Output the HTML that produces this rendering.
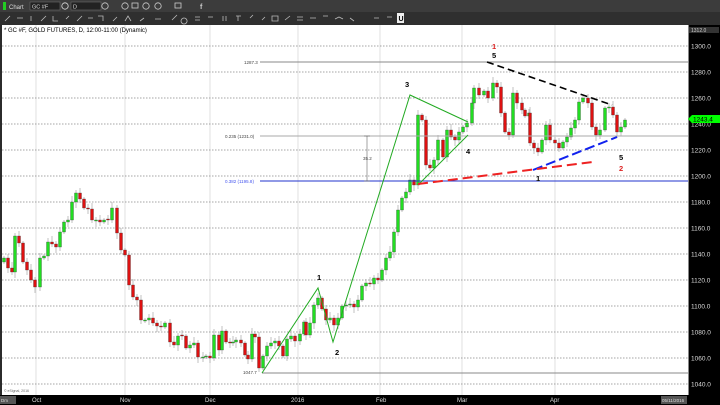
<!DOCTYPE html>
<html><head><meta charset="utf-8"><style>
html,body{margin:0;padding:0;background:#2b2b2b;width:720px;height:405px;overflow:hidden;font-family:"Liberation Sans",sans-serif}
#tb{position:absolute;left:0;top:0;width:720px;height:25px;background:linear-gradient(#4a4a4a,#2e2e2e)}
svg{position:absolute;left:0;top:0}
</style></head><body>
<div id="tb"></div>
<svg id="s" width="720" height="405" xmlns="http://www.w3.org/2000/svg" font-family="Liberation Sans, sans-serif">
<rect x="0" y="0" width="720" height="12" fill="#3c3c3c"/>
<rect x="0" y="12" width="720" height="12" fill="#2f2f2f"/>
<rect x="3" y="2" width="3" height="8" fill="#2c2"/>
<text x="9" y="9" font-size="6" fill="#ddd">Chart</text>
<rect x="30" y="2" width="30" height="8" fill="#222" stroke="#777" stroke-width="0.5"/><text x="32" y="8.5" font-size="5.5" fill="#ddd">GC #F</text>
<circle cx="65" cy="6" r="3.2" fill="none" stroke="#ddd" stroke-width="0.8"/>
<rect x="71" y="2" width="30" height="8" fill="#222" stroke="#777" stroke-width="0.5"/><text x="73" y="8.5" font-size="5.5" fill="#ddd">D</text>
<g fill="none" stroke="#ccc" stroke-width="0.8"><circle cx="105" cy="6" r="3.2"/><circle cx="125" cy="6" r="3.2"/><circle cx="146" cy="6" r="3.2"/><circle cx="158" cy="6" r="3.2"/><rect x="132" y="3" width="6" height="5"/><rect x="175" y="3" width="6" height="5"/></g>
<text x="200" y="9" font-size="7" fill="#ccc" font-weight="bold">f</text>
<g stroke="#bbb" stroke-width="0.8" fill="none">
<path d="M5 21l5-5M17 18h6M31 16v5M41 21l5-5M53 16v5h5M66 19l3-3M77 21l5-5M88 18h5M98 16h5v5M113 21l4-4M125 21l3-5 3 5M140 21l4-3M155 19h6M172 20l5-5M184 18a3 3 0 1 0 .1 0M195 17h5M195 20h5M208 17h5M223 16v5M226 16v5M236 16h5M238 16v5M250 18l3-3M262 20l3-3M272 16h6v5h-6zM285 20l5-4M297 17h6M297 20h6M310 18h6M323 16h5M335 19l4-2 4 2M350 18l4 3M374 18h5M387 17h5"/>
</g>
<rect x="397" y="13" width="7" height="10" fill="#eee"/><text x="398.5" y="21" font-size="7" fill="#000" font-weight="bold">U</text>
<rect x="2" y="25" width="686" height="370" fill="#fff"/>
<rect x="688" y="25" width="32" height="370" fill="#000"/>
<line x1="688.5" y1="25" x2="688.5" y2="395" stroke="#888"/>
<rect x="0" y="395" width="720" height="10" fill="#000"/>
<g id="grid"></g>
<g id="c"></g>
<g id="ann"></g>
</svg>
<script>
var g=document.getElementById('grid'),c=document.getElementById('c'),a=document.getElementById('ann');
var NS='http://www.w3.org/2000/svg';
function el(p,t,at,tx){var e=document.createElementNS(NS,t);for(var k in at)e.setAttribute(k,at[k]);if(tx!==undefined)e.textContent=tx;p.appendChild(e);return e;}
function Y(p){return 46+(1300-p)*1.3;}
// grid
[36,125,210,298,380,462,555].forEach(function(x){el(g,'line',{x1:x,y1:25,x2:x,y2:395,stroke:'#d8d8d8','stroke-width':0.8});});
for(var p=1300;p>=1040;p-=20){var y=Y(p);el(g,'line',{x1:2,y1:y,x2:688,y2:y,stroke:'#888','stroke-width':0.7,'stroke-dasharray':'1.5,1.5'});
el(g,'text',{x:691,y:y+2.5,'font-size':6.5,fill:'#ddd'},p.toFixed(1));}
el(g,'rect',{x:689,y:27,width:30,height:6,fill:'#333'});el(g,'text',{x:691,y:32,'font-size':5,fill:'#ccc'},'1312.0');
el(g,'polygon',{points:'688,119 692,115 720,115 720,123 692,123',fill:'#0f0'});
el(g,'text',{x:693,y:121.5,'font-size':6.5,fill:'#000'},'1243.4');
el(g,'text',{x:4,y:32,'font-size':6,fill:'#000'},'* GC #F, GOLD FUTURES, D, 12:00-11:00 (Dynamic)');
el(g,'text',{x:4,y:392,'font-size':3.5,fill:'#666'},'© eSignal, 2016');
[['Oct',32],['Nov',120],['Dec',205],['2016',291],['Feb',376],['Mar',457],['Apr',550]].forEach(function(m){el(g,'text',{x:m[1],y:402,'font-size':6,fill:'#ddd'},m[0]);});
el(g,'rect',{x:0,y:396,width:16,height:8,fill:'#555'});el(g,'text',{x:1,y:402,'font-size':4.5,fill:'#ddd'},'Dm');
el(g,'rect',{x:661,y:396,width:26,height:8,fill:'#555'});el(g,'text',{x:662,y:402,'font-size':4.5,fill:'#ddd'},'05/11/2016');
// candles
var pts=[[4,258],[8,268],[12,272],[15,236],[19,243],[23,262],[27,270],[31,280],[35,287],[40,258],[44,256],[48,242],[52,244],[56,247],[60,232],[64,222],[68,220],[72,202],[76,193],[80,199],[84,208],[88,209],[92,220],[96,220],[100,222],[104,220],[108,220],[112,208],[117,233],[121,250],[125,255],[129,285],[133,297],[137,300],[141,320],[145,320],[149,318],[153,323],[157,326],[161,327],[165,323],[170,342],[174,345],[178,336],[182,336],[186,348],[190,345],[194,343],[198,357],[203,357],[206,356],[210,358],[214,335],[219,350],[222,331],[226,342],[230,343],[233,342],[236,340],[241,343],[245,355],[248,359],[252,334],[255,337],[259,368],[263,356],[267,346],[271,343],[275,341],[279,346],[283,356],[287,339],[291,336],[295,341],[300,334],[304,322],[306,335],[310,323],[314,305],[318,298],[322,309],[326,320],[330,318],[334,325],[338,318],[342,306],[346,305],[350,304],[354,307],[358,300],[362,286],[366,283],[370,284],[374,278],[378,280],[382,270],[386,258],[390,252],[394,232],[398,210],[402,198],[406,192],[410,180],[414,185],[418,115],[422,120],[426,165],[430,168],[434,160],[438,140],[443,157],[447,130],[451,137],[455,140],[459,132],[463,127],[467,123],[472,103],[474,88],[479,95],[484,91],[488,98],[493,83],[497,87],[501,113],[505,132],[509,135],[513,93],[517,103],[522,110],[525,116],[529,113],[530,143],[534,148],[538,152],[542,140],[546,125],[550,140],[555,143],[559,148],[563,142],[567,137],[571,128],[575,120],[579,102],[583,98],[588,103],[592,127],[596,135],[600,130],[605,108],[609,107],[613,115],[617,132],[621,127],[625,120]];
var prev=262;
pts.forEach(function(q,i){var x=q[0],cl=q[1],op=prev;if(Math.abs(op-cl)<1){op=cl+(i%2?1:-1);}var up=cl<op;
var t=Math.min(op,cl)-2-(i*7%5),b=Math.max(op,cl)+2+(i*3%5);
el(c,'line',{x1:x,y1:t,x2:x,y2:b,stroke:'#999','stroke-width':0.6});
el(c,'rect',{x:x-1.5,y:Math.min(op,cl),width:3,height:Math.max(1,Math.abs(op-cl)),fill:up?'#22dd22':'#dd1111',stroke:'#333','stroke-width':0.3});
prev=cl;});
// annotations
function L(x1,y1,x2,y2,s,w,d){var o={x1:x1,y1:y1,x2:x2,y2:y2,stroke:s,'stroke-width':w};if(d)o['stroke-dasharray']=d;el(a,'line',o);}
L(260,62,688,62,'#888',1);L(260,136,688,136,'#aaa',1);L(260,181,688,181,'#2233cc',1);L(262,373,688,373,'#888',1);
L(367,136,367,181,'#666',0.6);L(364,136,370,136,'#666',0.6);L(364,181,370,181,'#666',0.6);
el(a,'text',{x:363,y:160,'font-size':4.5,fill:'#444'},'35.2');
el(a,'text',{x:244,y:64,'font-size':4.5,fill:'#444'},'1287.3');
el(a,'text',{x:225,y:138,'font-size':4.5,fill:'#444'},'0.235 (1231.0)');
el(a,'text',{x:225,y:183,'font-size':4.5,fill:'#4455ee'},'0.382 (1195.8)');
el(a,'text',{x:243,y:374,'font-size':4.5,fill:'#444'},'1047.7');
el(a,'polyline',{points:'262,373 318,288 333,342 410,95 468,122',fill:'none',stroke:'#22aa22','stroke-width':1});
L(418,185,468,135,'#22aa22',1);
L(487,62,612,105,'#000',1.6,'7,4');
L(533,170,617,137,'#1122ee',2,'10,4');
L(418,184,593,162,'#ee2222',2,'10,5');
[['1',317,280,'#000'],['2',335,355,'#000'],['3',405,87,'#000'],['4',466,154,'#000'],['5',492,58,'#000'],['1',492,49,'#dd2222'],['1',536,181,'#000'],['5',619,160,'#000'],['2',619,171,'#dd2222']].forEach(function(t){el(a,'text',{x:t[1],y:t[2],'font-size':7.5,'font-weight':'bold',fill:t[3]},t[0]);});
</script>
</body></html>
